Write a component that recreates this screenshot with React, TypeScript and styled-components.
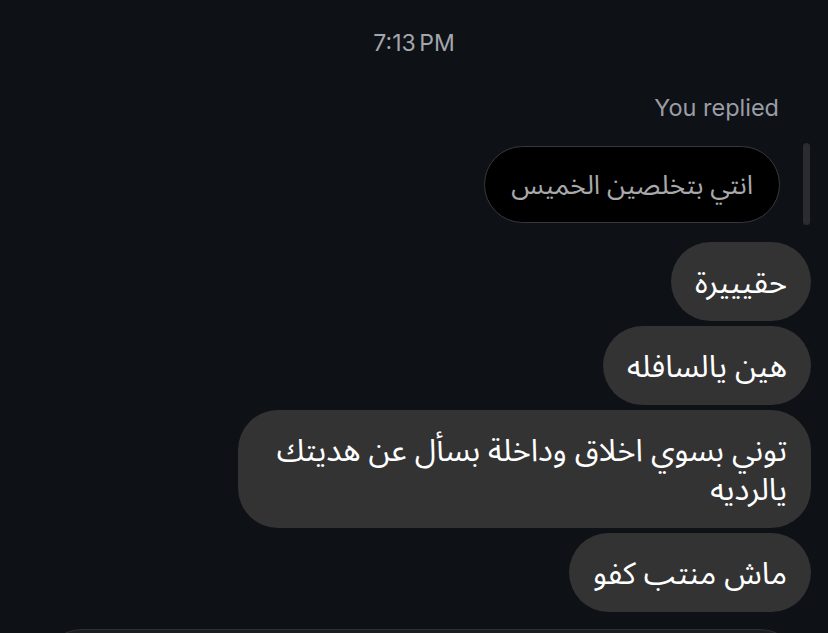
import React from "react";
import styled, { createGlobalStyle } from "styled-components";

const Global = createGlobalStyle`
  html, body { margin: 0; padding: 0; background: #0e1116; }
  * { box-sizing: border-box; }
`;

const Page = styled.div`
  width: 828px;
  height: 633px;
  overflow: hidden;
  background: #0e1116;
  display: flex;
  flex-direction: column;
  font-family: Inter, "Noto Sans", "DejaVu Sans", sans-serif;
`;

const TimeStamp = styled.div`
  margin-top: 30px;
  text-align: center;
  font-size: 23px;
  line-height: 26px;
  color: #a3a6ac;
  word-spacing: -3px;
`;

const Thread = styled.div`
  display: flex;
  flex-direction: column;
  align-items: flex-end;
  padding-right: 17px;
`;

const ReplyLabel = styled.div`
  margin-top: 38px;
  margin-right: 32px;
  font-size: 23.5px;
  line-height: 28px;
  color: #9a9ea5;
`;

const ReplyRow = styled.div`
  margin-top: 21px;
  display: flex;
  align-items: center;
  gap: 23px;
  margin-right: 1px;
`;

const ReplyBubble = styled.div`
  direction: rtl;
  background: #000;
  border: 1.5px solid #37383b;
  border-radius: 40px;
  padding: 23px 26px 19px;
  font-family: "Noto Sans Arabic", "DejaVu Sans", sans-serif;
  font-size: 26.5px;
  line-height: 33px;
  color: #a9a9ab;
`;

const QuoteBar = styled.div`
  width: 7px;
  height: 82px;
  border-radius: 4px;
  background: #2a2c30;
`;

const Bubble = styled.div<{ $first?: boolean }>`
  direction: rtl;
  margin-top: ${(p) => (p.$first ? "17px" : "5px")};
  max-width: 573px;
  background: #333333;
  border-radius: 40px;
  padding: 22px 24px 18px;
  font-family: "Noto Sans Arabic", "DejaVu Sans", sans-serif;
  font-size: 31px;
  line-height: 39px;
  color: #ffffff;
`;

const Composer = styled.div`
  margin: 17px 28px 0 42px;
  height: 80px;
  flex-shrink: 0;
  border-radius: 40px;
  border: 1.5px solid #2e3034;
  background: #1b1d21;
`;

export default function App() {
  return (
    <>
      <Global />
      <Page>
        <TimeStamp>7:13 PM</TimeStamp>
        <Thread>
          <ReplyLabel>You replied</ReplyLabel>
          <ReplyRow>
            <ReplyBubble>انتي بتخلصين الخميس</ReplyBubble>
            <QuoteBar />
          </ReplyRow>
          <Bubble $first>حقيييرة</Bubble>
          <Bubble>هين يالسافله</Bubble>
          <Bubble>توني بسوي اخلاق وداخلة بسأل عن هديتك يالرديه</Bubble>
          <Bubble>ماش منتب كفو</Bubble>
        </Thread>
        <Composer />
      </Page>
    </>
  );
}
